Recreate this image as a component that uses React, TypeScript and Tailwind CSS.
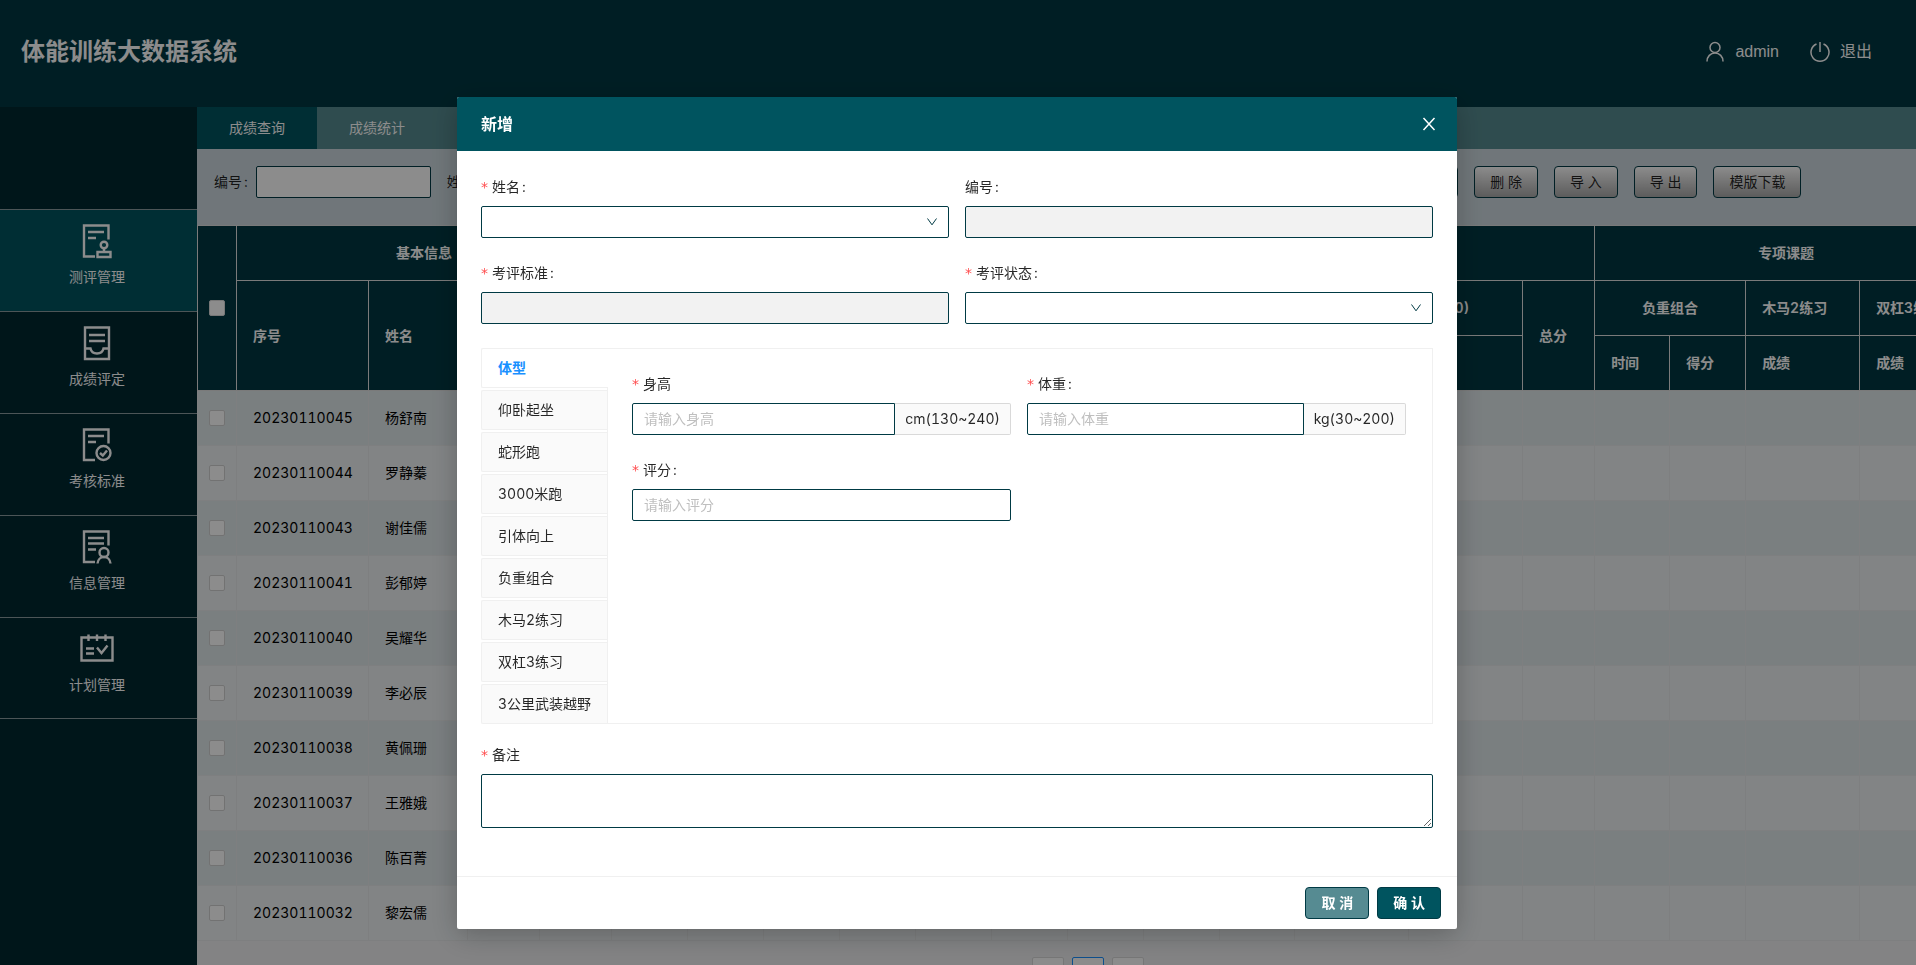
import { useState } from "react";
import type { ReactNode } from "react";

const menus = [
  { key: "evaluate", label: "测评管理" },
  { key: "score", label: "成绩评定" },
  { key: "standard", label: "考核标准" },
  { key: "info", label: "信息管理" },
  { key: "plan", label: "计划管理" }
];

const rows = [
  { no: "20230110045", name: "杨舒南" },
  { no: "20230110044", name: "罗静蓁" },
  { no: "20230110043", name: "谢佳儒" },
  { no: "20230110041", name: "彭郁婷" },
  { no: "20230110040", name: "吴耀华" },
  { no: "20230110039", name: "李必辰" },
  { no: "20230110038", name: "黄佩珊" },
  { no: "20230110037", name: "王雅娥" },
  { no: "20230110036", name: "陈百菁" },
  { no: "20230110032", name: "黎宏儒" }
];

const columnWidths = [
  40, 132, 99, 72, 72, 76, 76, 76, 76, 76, 76, 76, 76, 75, 114, 114, 72, 75, 76, 114, 118
];

const subjects = [
  "体型",
  "仰卧起坐",
  "蛇形跑",
  "3000米跑",
  "引体向上",
  "负重组合",
  "木马2练习",
  "双杠3练习",
  "3公里武装越野"
];

const MenuIcon = ({ name }: { name: string }) => (
  <svg width="36" height="36" viewBox="0 0 36 36" fill="none" stroke="currentColor" strokeWidth="2.4">
    {name === "evaluate" && (
      <>
        <path d="M29.5 15.5v-14H5v31h11" />
        <path d="M9 8h16M9 14h8" />
        <circle cx="25" cy="21" r="3.3" />
        <path d="M25 24.5V28M18.5 28h13v5h-13z" />
      </>
    )}
    {name === "score" && (
      <>
        <path d="M6 1.5h24v31.5H6z" />
        <path d="M10 9h16M10 15h16" />
        <path d="M6 22.5h5.5c.6 3 3.2 5 6.5 5s5.9-2 6.5-5H30" />
      </>
    )}
    {name === "standard" && (
      <>
        <path d="M29.5 15.5v-14H5V32h11" />
        <path d="M9 8h16M9 14h8" />
        <circle cx="24.5" cy="25" r="7" />
        <path d="M21 25l2.8 2.5 4.2-5" />
      </>
    )}
    {name === "info" && (
      <>
        <path d="M29.5 15.5v-14H5V32h11" />
        <path d="M9 8h16M9 13.5h16M9 19.5h8" />
        <circle cx="25" cy="22.5" r="4.5" />
        <path d="M18.5 33.5c.3-4 3-6.5 6.5-6.5s6.2 2.5 6.5 6.5" />
      </>
    )}
    {name === "plan" && (
      <>
        <path d="M2.5 5.5h31v23h-31z" />
        <path d="M9.5 2.5V9M18 2.5V9M26.5 2.5V9" />
        <path d="M7 16.5h8M7 21.5h8" />
        <path d="M18 15.5l4.5 5.5 6-7.5" />
      </>
    )}
  </svg>
);

const ToolButton = ({ children }: { children: ReactNode }) => (
  <button
    type="button"
    className="h-8 shrink-0 whitespace-nowrap rounded border border-[#003a44] bg-linear-to-b from-white to-[#a8a8a8] px-[15px] text-black/85"
  >
    {children}
  </button>
);

const ToolField = ({ id, label }: { id: string; label: string }) => (
  <div className="flex shrink-0 items-center">
    <label htmlFor={id}>
      {label}
      <span className="ml-0.5 mr-2">:</span>
    </label>
    <input id={id} className="h-8 w-[175px] rounded-xs border border-[#003a44] bg-white px-3" />
  </div>
);

interface FormItemProps {
  id: string;
  label: string;
  required?: boolean;
  colon?: boolean;
  children: ReactNode;
}

const FormItem = ({ id, label, required = true, colon = true, children }: FormItemProps) => (
  <div>
    <label htmlFor={id} className="mb-2 flex h-[22px] items-center">
      {required && <span className="mr-1 w-[7px] font-['DejaVu_Sans',sans-serif] text-[#ff4d4f]">*</span>}
      {label}
      {colon && <span className="ml-0.5">:</span>}
    </label>
    {children}
  </div>
);

const inputClass =
  "h-8 w-full rounded-xs border border-[#003a44] bg-white px-[11px] pb-0.5 outline-none placeholder:text-[#bfbfbf] disabled:bg-[#f2f2f2]";

const SelectBox = ({ id }: { id: string }) => (
  <div className="relative">
    <select id={id} className={`${inputClass} appearance-none`} />
    <svg
      className="pointer-events-none absolute right-[11px] top-2.5 text-[#003a44]"
      width="12"
      height="12"
      viewBox="0 0 12 12"
      fill="none"
      stroke="currentColor"
    >
      <path d="M1.5 2.5L6 8.8l4.5-6.3" />
    </svg>
  </div>
);

const addonClass =
  "flex h-8 shrink-0 items-center rounded-r-xs border border-l-0 border-[#d9d9d9] bg-[#fafafa] px-2.5";

const th = "border-b border-r border-[#dedede] px-4 font-semibold";
const td = "border-b border-r border-[#e6e8e9]";

const ScoreTable = () => (
  <table className="w-[1781px] table-fixed border-separate border-spacing-0 border-t border-[#dedede]">
    <colgroup>
      {columnWidths.map((width, i) => (
        <col key={i} style={{ width }} />
      ))}
    </colgroup>
    <thead className="bg-[#003842] text-left text-white">
      <tr className="h-[55px]">
        <th rowSpan={3} className="border-x border-b border-[#dedede] p-0">
          <input
            type="checkbox"
            aria-label="全选"
            className="mx-auto block size-4 appearance-none rounded-xs border border-[#d9d9d9] bg-white"
          />
        </th>
        <th colSpan={4} className={`${th} text-center`}>基本信息</th>
        <th colSpan={12} className={`${th} text-center`}>通用课题</th>
        <th colSpan={4} className={`${th} text-center`}>专项课题</th>
      </tr>
      <tr className="h-[55px]">
        <th rowSpan={2} className={th}>序号</th>
        <th rowSpan={2} className={th}>姓名</th>
        <th rowSpan={2} className={th}>性别</th>
        <th rowSpan={2} className={th}>年龄</th>
        <th colSpan={3} className={`${th} text-center`}>体型</th>
        <th colSpan={2} className={`${th} text-center`}>仰卧起坐</th>
        <th colSpan={2} className={`${th} text-center`}>蛇形跑</th>
        <th colSpan={2} className={`${th} text-center`}>3000米跑</th>
        <th colSpan={2} className={`${th} text-center`}>引体向上(30~100)</th>
        <th rowSpan={2} className={th}>总分</th>
        <th colSpan={2} className={`${th} text-center`}>负重组合</th>
        <th className={`${th} whitespace-nowrap`}>木马2练习</th>
        <th className={`${th} whitespace-nowrap`}>双杠3练习</th>
      </tr>
      <tr className="h-[55px]">
        {["身高", "体重", "评分", "次数", "得分", "时间", "得分", "时间", "得分", "次数", "得分", "时间", "得分", "成绩", "成绩"].map(
          (title, i) => (
            <th key={i} className={th}>{title}</th>
          )
        )}
      </tr>
    </thead>
    <tbody className="text-black">
      {rows.map(row => (
        <tr key={row.no} className="h-[55px] odd:bg-[#dfe7ea] even:bg-[#edf1f3]">
          <td className={`${td} border-l p-0`}>
            <input
              type="checkbox"
              aria-label={row.no}
              className="mx-auto block size-4 appearance-none rounded-xs border border-[#d0d0d0] bg-white"
            />
          </td>
          <td className={`${td} px-4`}>{row.no}</td>
          <td className={`${td} px-4`}>{row.name}</td>
          {columnWidths.slice(3).map((_, i) => (
            <td key={i} className={td} />
          ))}
        </tr>
      ))}
    </tbody>
  </table>
);

const AddModal = () => {
  const [subject, setSubject] = useState("体型");

  return (
    <div className="fixed inset-0 overflow-auto bg-black/45 pr-0.5 pt-[97px]">
      <div
        role="dialog"
        aria-labelledby="modal-title"
        className="mx-auto w-[1000px] max-w-full overflow-hidden rounded-xs bg-white shadow-[0_6px_28px_rgba(0,0,0,0.25)]"
      >
        <div className="flex h-[54px] items-center justify-between bg-[#00545f] pl-6 pr-5 text-white">
          <h2 id="modal-title" className="text-base font-bold">新增</h2>
          <button type="button" aria-label="关闭">
            <svg width="16" height="16" viewBox="0 0 16 16" fill="none" stroke="currentColor" strokeWidth="1.5">
              <path d="M2.5 2l11 12M13.5 2l-11 12" />
            </svg>
          </button>
        </div>

        <form className="px-6 pb-12 pt-[25px]">
          <div className="grid grid-cols-2 gap-x-4 gap-y-6">
            <FormItem id="name" label="姓名">
              <SelectBox id="name" />
            </FormItem>
            <FormItem id="code" label="编号" required={false}>
              <input id="code" disabled className={inputClass} />
            </FormItem>
            <FormItem id="standard" label="考评标准">
              <input id="standard" disabled className={inputClass} />
            </FormItem>
            <FormItem id="status" label="考评状态">
              <SelectBox id="status" />
            </FormItem>
          </div>

          {/* Subject tabs */}
          <div className="mb-5 mt-6 flex">
            <div role="tablist" className="flex w-[126px] shrink-0 flex-col gap-0.5">
              {subjects.map(item => (
                <button
                  key={item}
                  type="button"
                  role="tab"
                  aria-selected={item === subject}
                  onClick={() => setSubject(item)}
                  className={`h-10 whitespace-nowrap rounded-l-xs border border-r-0 border-[#f0f0f0] pl-4 text-left ${
                    item === subject ? "relative -mr-px bg-white font-bold text-[#1890ff]" : "bg-[#fafafa]"
                  }`}
                >
                  {item}
                </button>
              ))}
            </div>
            <div className="flex-1 border border-[#f0f0f0] pl-6 pr-[26px] pt-6">
              <div className="grid grid-cols-2 gap-x-4 gap-y-6">
                <FormItem id="height" label="身高" colon={false}>
                  <div className="flex">
                    <input id="height" placeholder="请输入身高" className={`${inputClass} min-w-0 flex-1 rounded-r-none`} />
                    <span className={addonClass}>cm(130~240)</span>
                  </div>
                </FormItem>
                <FormItem id="weight" label="体重">
                  <div className="flex">
                    <input id="weight" placeholder="请输入体重" className={`${inputClass} min-w-0 flex-1 rounded-r-none`} />
                    <span className={addonClass}>kg(30~200)</span>
                  </div>
                </FormItem>
                <FormItem id="grade" label="评分">
                  <input id="grade" placeholder="请输入评分" className={inputClass} />
                </FormItem>
              </div>
            </div>
          </div>

          <FormItem id="remark" label="备注" colon={false}>
            <textarea id="remark" className="block h-[54px] w-full rounded-xs border border-[#003a44] px-[11px] py-1 outline-none" />
          </FormItem>
        </form>

        <div className="flex justify-end gap-2 border-t border-[#f0f0f0] px-4 py-2.5 font-bold text-white">
          <button type="button" className="h-8 rounded border border-[#003a44] bg-[#568b92] px-[15px]">取 消</button>
          <button type="button" className="h-8 rounded border border-[#003a44] bg-[#00545f] px-[15px]">确 认</button>
        </div>
      </div>
    </div>
  );
};

export default function App() {
  return (
    <div className="flex h-screen flex-col overflow-hidden bg-[#eeeff1] font-[Inter,'Noto_Sans_CJK_SC',sans-serif] text-sm leading-[22px] text-black/85 tabular-nums">
      <header className="flex h-[107px] shrink-0 items-center justify-between bg-[#003842] pb-1 pl-[21px] pr-11 text-white">
        <h1 className="text-2xl font-bold">体能训练大数据系统</h1>
        <div className="flex items-center gap-[31px] text-base font-['Liberation_Sans','Noto_Sans_CJK_SC',sans-serif]">
          <a href="#user" className="flex items-center gap-2.5">
            <svg width="20" height="22" viewBox="0 0 20 22" fill="none" stroke="currentColor" strokeWidth="1.5">
              <circle cx="10" cy="6.5" r="5" />
              <path d="M2 20.5c0-5 3.5-8.5 8-8.5s8 3.5 8 8.5" />
            </svg>
            admin
          </a>
          <a href="#logout" className="flex items-center gap-2.5">
            <svg width="20" height="22" viewBox="0 0 20 22" fill="none" stroke="currentColor" strokeWidth="1.5">
              <path d="M6.5 3a9 9 0 1 0 7 0M10 1v10" />
            </svg>
            退出
          </a>
        </div>
      </header>

      <div className="flex min-h-0 flex-1">
        <nav className="w-[197px] shrink-0 bg-[#002831] pt-[102px] text-white">
          {menus.map((menu, i) => (
            <a
              key={menu.key}
              href={`#${menu.key}`}
              className={`flex h-[102px] flex-col items-center gap-1.5 border-t border-[#8a9b9f] pr-[3px] pt-3.5 last:border-b ${
                i === 0 ? "bg-[#00545f]" : ""
              }`}
            >
              <MenuIcon name={menu.key} />
              {menu.label}
            </a>
          ))}
        </nav>

        <main className="min-w-0 flex-1 overflow-hidden">
          <div role="tablist" className="flex h-[42px] bg-[#568b90] text-white">
            <button type="button" role="tab" aria-selected="true" className="w-[120px] bg-[#00545f]">成绩查询</button>
            <button type="button" role="tab" aria-selected="false" className="w-[120px]">成绩统计</button>
          </div>

          <div className="flex gap-4 bg-[#ccd8de] pb-[27px] pl-[17px] pt-[17px]">
            <ToolField id="q-code" label="编号" />
            <ToolField id="q-name" label="姓名" />
            <ToolField id="q-unit" label="单位" />
            <ToolField id="q-date" label="日期" />
            <div className="ml-2.5 flex gap-4">
              <ToolButton>查 询</ToolButton>
              <ToolButton>重 置</ToolButton>
              <ToolButton>新 增</ToolButton>
              <ToolButton>编 辑</ToolButton>
              <ToolButton>删 除</ToolButton>
              <ToolButton>导 入</ToolButton>
              <ToolButton>导 出</ToolButton>
              <ToolButton>模版下载</ToolButton>
            </div>
          </div>

          <ScoreTable />

          <div className="mt-4 flex justify-center gap-2 pl-[63px]">
            <button type="button" aria-label="上一页" className="size-8 rounded-xs border border-[#d9d9d9] bg-white" />
            <button type="button" aria-label="1" className="size-8 rounded-xs border border-[#1890ff] bg-white" />
            <button type="button" aria-label="下一页" className="size-8 rounded-xs border border-[#d9d9d9] bg-white" />
          </div>
        </main>
      </div>

      <AddModal />
    </div>
  );
}
